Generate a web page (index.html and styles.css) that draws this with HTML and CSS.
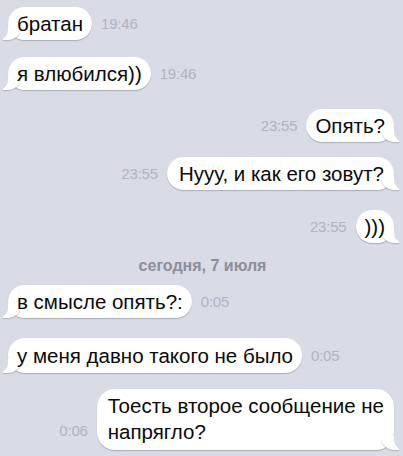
FILE: index.html
```html
<!DOCTYPE html>
<html lang="ru">
<head>
<meta charset="utf-8">
<link rel="stylesheet" href="styles.css">
</head>
<body>
<div class="chat">
  <div class="row in r1"><div class="bubble">братан</div><span class="time">19:46</span></div>
  <div class="row in r2"><div class="bubble">я влюбился))</div><span class="time">19:46</span></div>
  <div class="row out r3"><span class="time">23:55</span><div class="bubble">Опять?</div></div>
  <div class="row out r4"><span class="time">23:55</span><div class="bubble">Нууу, и как его зовут?</div></div>
  <div class="row out r5"><span class="time">23:55</span><div class="bubble">)))</div></div>
  <div class="date">сегодня, 7 июля</div>
  <div class="row in r6"><div class="bubble">в смысле опять?:</div><span class="time">0:05</span></div>
  <div class="row in r7"><div class="bubble">у меня давно такого не было</div><span class="time">0:05</span></div>
  <div class="row out r8"><span class="time">0:06</span><div class="bubble multi">Тоесть второе сообщение не<br>напрягло?</div></div>
</div>
</body>
</html>
```

FILE: styles.css
```css
html, body {
  margin: 0;
  padding: 0;
  background: #d9dbe6;
  width: 403px;
  height: 456px;
  overflow: hidden;
}
.chat {
  display: flex;
  flex-direction: column;
  padding: 7px 9px 0 8px;
  font-family: "Liberation Sans", Arial, sans-serif;
}
.row {
  display: flex;
  align-items: center;
  gap: 9px;
}
.row.out {
  justify-content: flex-end;
}
.bubble {
  position: relative;
  z-index: 0;
  background: #fff;
  color: #0a0a0a;
  font-size: 20.5px;
  line-height: 33px;
  height: 33px;
  padding: 0 9px;
  border-radius: 17px;
  box-shadow: 0 1px 1px rgba(80, 84, 100, 0.35);
  white-space: nowrap;
}
.bubble::before,
.bubble::after {
  content: "";
  position: absolute;
  z-index: -1;
  bottom: 0;
  height: 14px;
}
.in .bubble::before {
  left: -5px;
  width: 18px;
  background: #fff;
  border-bottom-right-radius: 14px 12px;
  box-shadow: 0 1px 1px rgba(80, 84, 100, 0.3);
}
.in .bubble::after {
  left: -10px;
  width: 10px;
  background: #d9dbe6;
  border-bottom-right-radius: 10px 10px;
}
.out .bubble::before {
  right: -5px;
  width: 18px;
  background: #fff;
  border-bottom-left-radius: 14px 12px;
  box-shadow: 0 1px 1px rgba(80, 84, 100, 0.3);
}
.out .bubble::after {
  right: -10px;
  width: 10px;
  background: #d9dbe6;
  border-bottom-left-radius: 10px 10px;
}
.bubble.multi {
  height: auto;
  line-height: 26px;
  padding: 4px 10px 5px 11px;
  border-radius: 18px;
}
.time {
  font-size: 15px;
  color: #b0b3c2;
  letter-spacing: -0.2px;
}
.r2 { margin-top: 17px; }
.r3 { margin-top: 19px; }
.r4 { margin-top: 15px; }
.r4 .bubble { padding: 0 10px 0 12px; }
.r5 { margin-top: 20px; }
.date {
  margin-top: 13px;
  text-align: center;
  font-size: 16px;
  font-weight: bold;
  color: #8b8e9c;
  line-height: 20px;
  padding-left: 3px;
}
.r6 { margin-top: 9px; }
.r7 { margin-top: 20px; }
.r7 .bubble { height: 35px; line-height: 35px; }
.r8 { margin-top: 16px; align-items: flex-end; }
.r8 .time { padding-bottom: 11px; }
```
